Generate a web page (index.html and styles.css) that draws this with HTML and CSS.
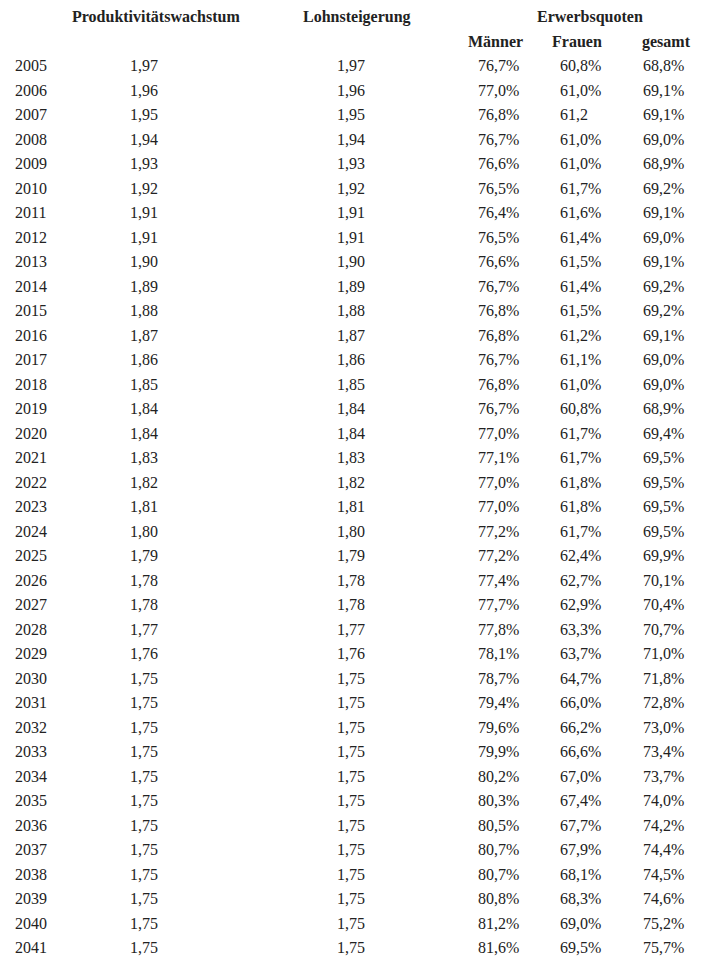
FILE: index.html
```html
<!DOCTYPE html>
<html lang="de">
<head>
<meta charset="utf-8">
<title>Tabelle</title>
<link rel="stylesheet" href="styles.css">
</head>
<body>
<div class="table">
  <div class="head head-1">
    <span></span>
    <span>Produktivitätswachstum</span>
    <span>Lohnsteigerung</span>
    <span>Erwerbsquoten</span>
  </div>
  <div class="head head-2">
    <span></span>
    <span>Männer</span>
    <span>Frauen</span>
    <span>gesamt</span>
  </div>
  <div class="body">
    <div class="row"><span>2005</span><span>1,97</span><span>1,97</span><span>76,7%</span><span>60,8%</span><span>68,8%</span></div>
    <div class="row"><span>2006</span><span>1,96</span><span>1,96</span><span>77,0%</span><span>61,0%</span><span>69,1%</span></div>
    <div class="row"><span>2007</span><span>1,95</span><span>1,95</span><span>76,8%</span><span>61,2</span><span>69,1%</span></div>
    <div class="row"><span>2008</span><span>1,94</span><span>1,94</span><span>76,7%</span><span>61,0%</span><span>69,0%</span></div>
    <div class="row"><span>2009</span><span>1,93</span><span>1,93</span><span>76,6%</span><span>61,0%</span><span>68,9%</span></div>
    <div class="row"><span>2010</span><span>1,92</span><span>1,92</span><span>76,5%</span><span>61,7%</span><span>69,2%</span></div>
    <div class="row"><span>2011</span><span>1,91</span><span>1,91</span><span>76,4%</span><span>61,6%</span><span>69,1%</span></div>
    <div class="row"><span>2012</span><span>1,91</span><span>1,91</span><span>76,5%</span><span>61,4%</span><span>69,0%</span></div>
    <div class="row"><span>2013</span><span>1,90</span><span>1,90</span><span>76,6%</span><span>61,5%</span><span>69,1%</span></div>
    <div class="row"><span>2014</span><span>1,89</span><span>1,89</span><span>76,7%</span><span>61,4%</span><span>69,2%</span></div>
    <div class="row"><span>2015</span><span>1,88</span><span>1,88</span><span>76,8%</span><span>61,5%</span><span>69,2%</span></div>
    <div class="row"><span>2016</span><span>1,87</span><span>1,87</span><span>76,8%</span><span>61,2%</span><span>69,1%</span></div>
    <div class="row"><span>2017</span><span>1,86</span><span>1,86</span><span>76,7%</span><span>61,1%</span><span>69,0%</span></div>
    <div class="row"><span>2018</span><span>1,85</span><span>1,85</span><span>76,8%</span><span>61,0%</span><span>69,0%</span></div>
    <div class="row"><span>2019</span><span>1,84</span><span>1,84</span><span>76,7%</span><span>60,8%</span><span>68,9%</span></div>
    <div class="row"><span>2020</span><span>1,84</span><span>1,84</span><span>77,0%</span><span>61,7%</span><span>69,4%</span></div>
    <div class="row"><span>2021</span><span>1,83</span><span>1,83</span><span>77,1%</span><span>61,7%</span><span>69,5%</span></div>
    <div class="row"><span>2022</span><span>1,82</span><span>1,82</span><span>77,0%</span><span>61,8%</span><span>69,5%</span></div>
    <div class="row"><span>2023</span><span>1,81</span><span>1,81</span><span>77,0%</span><span>61,8%</span><span>69,5%</span></div>
    <div class="row"><span>2024</span><span>1,80</span><span>1,80</span><span>77,2%</span><span>61,7%</span><span>69,5%</span></div>
    <div class="row"><span>2025</span><span>1,79</span><span>1,79</span><span>77,2%</span><span>62,4%</span><span>69,9%</span></div>
    <div class="row"><span>2026</span><span>1,78</span><span>1,78</span><span>77,4%</span><span>62,7%</span><span>70,1%</span></div>
    <div class="row"><span>2027</span><span>1,78</span><span>1,78</span><span>77,7%</span><span>62,9%</span><span>70,4%</span></div>
    <div class="row"><span>2028</span><span>1,77</span><span>1,77</span><span>77,8%</span><span>63,3%</span><span>70,7%</span></div>
    <div class="row"><span>2029</span><span>1,76</span><span>1,76</span><span>78,1%</span><span>63,7%</span><span>71,0%</span></div>
    <div class="row"><span>2030</span><span>1,75</span><span>1,75</span><span>78,7%</span><span>64,7%</span><span>71,8%</span></div>
    <div class="row"><span>2031</span><span>1,75</span><span>1,75</span><span>79,4%</span><span>66,0%</span><span>72,8%</span></div>
    <div class="row"><span>2032</span><span>1,75</span><span>1,75</span><span>79,6%</span><span>66,2%</span><span>73,0%</span></div>
    <div class="row"><span>2033</span><span>1,75</span><span>1,75</span><span>79,9%</span><span>66,6%</span><span>73,4%</span></div>
    <div class="row"><span>2034</span><span>1,75</span><span>1,75</span><span>80,2%</span><span>67,0%</span><span>73,7%</span></div>
    <div class="row"><span>2035</span><span>1,75</span><span>1,75</span><span>80,3%</span><span>67,4%</span><span>74,0%</span></div>
    <div class="row"><span>2036</span><span>1,75</span><span>1,75</span><span>80,5%</span><span>67,7%</span><span>74,2%</span></div>
    <div class="row"><span>2037</span><span>1,75</span><span>1,75</span><span>80,7%</span><span>67,9%</span><span>74,4%</span></div>
    <div class="row"><span>2038</span><span>1,75</span><span>1,75</span><span>80,7%</span><span>68,1%</span><span>74,5%</span></div>
    <div class="row"><span>2039</span><span>1,75</span><span>1,75</span><span>80,8%</span><span>68,3%</span><span>74,6%</span></div>
    <div class="row"><span>2040</span><span>1,75</span><span>1,75</span><span>81,2%</span><span>69,0%</span><span>75,2%</span></div>
    <div class="row"><span>2041</span><span>1,75</span><span>1,75</span><span>81,6%</span><span>69,5%</span><span>75,7%</span></div>
  </div>
</div>
</body>
</html>
```

FILE: styles.css
```css
html, body {
  margin: 0;
  padding: 0;
  background: #ffffff;
}

body {
  font-family: "Liberation Serif", Tinos, "Times New Roman", Times, serif;
  font-size: 16px;
  color: #222222;
}

.table {
  padding: 5px 0 0 15px;
}

.head,
.row {
  display: grid;
  line-height: 24.5px;
  height: 24.5px;
  white-space: nowrap;
}

.head {
  font-weight: bold;
}

.head-1 {
  grid-template-columns: 57px 231px 234px auto;
}

.head-2 {
  grid-template-columns: 453px 84px 90px auto;
}

.body {
  margin-top: 0;
}

.row {
  grid-template-columns: 115px 207px 141px 82px 83px auto;
}
```
